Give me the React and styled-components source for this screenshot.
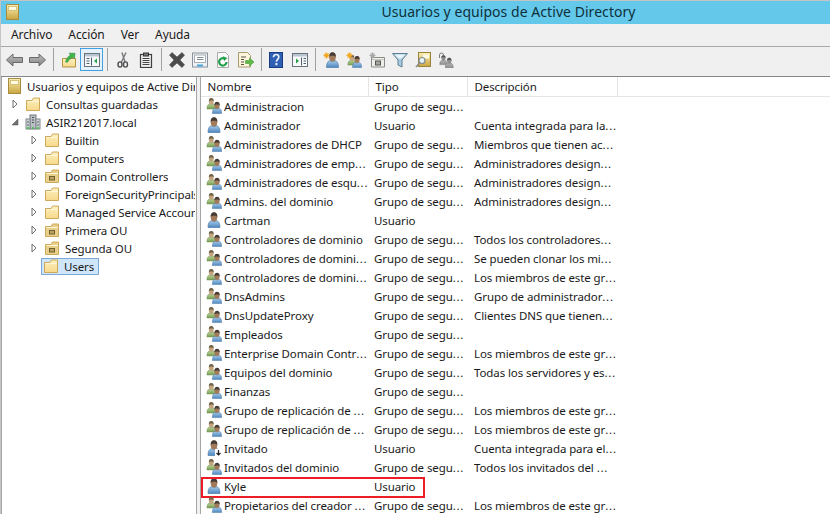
import React from 'react';
import styled, { createGlobalStyle } from 'styled-components';

const GlobalStyle = createGlobalStyle`
  html, body {
    margin: 0;
    padding: 0;
    background: #f0f0f0;
    overflow: hidden;
  }
`

const Window = styled.div`
  width: 830px;
  height: 514px;
  overflow: hidden;
  display: flex;
  flex-direction: column;
  background: #f0f0f0;
  border-top: 1px solid #c4c4c4;
  border-left: 1px solid #c4c4c4;
  box-sizing: border-box;
  font-family: "Noto Sans", sans-serif;
  font-size: 11.5px;
  letter-spacing: -0.1px;
  color: #1a1a1a;
`

const TitleBar = styled.div`
  height: 21px;
  flex: none;
  background: #63c8ea;
  position: relative;
  display: flex;
  align-items: center;
  justify-content: center;
  padding: 0 0 2px 186px;
  font-size: 14px;
  letter-spacing: 0.05px;
  color: #10303c;
`

const AppIcon = styled.span`
  position: absolute;
  left: 3px;
  top: 3px;
  display: flex;
`

const MenuBar = styled.div`
  height: 20px;
  flex: none;
  display: flex;
  align-items: center;
  padding: 0 0 2px 2px;
  border-bottom: 1px solid #a9a9a9;
  font-size: 12px;
`

const MenuItem = styled.span`
  padding: 0 8px;
`

const ToolBar = styled.div`
  height: 28px;
  flex: none;
  display: flex;
  align-items: flex-start;
  padding: 1px 0 0 2px;
  border-bottom: 1px solid #86868c;
`

const ToolSlot = styled.span`
  width: 23px;
  height: 23px;
  box-sizing: border-box;
  flex: none;
  display: flex;
  align-items: center;
  justify-content: center;
  border: 1px solid ${p => (p.$active ? '#3fa0e4' : 'transparent')};
  background: ${p => (p.$active ? '#e6f2fb' : 'none')};
`

const ToolSep = styled.span`
  width: 1px;
  height: 23px;
  flex: none;
  background: #a0a0a0;
  margin: 0 3px 0 4px;
`

const Panes = styled.div`
  flex: 1;
  min-height: 0;
  display: flex;
  gap: 3px;
`

const TreePane = styled.div`
  width: 196px;
  box-sizing: border-box;
  flex: none;
  background: #fff;
  overflow: hidden;
  border-left: 1px solid #a6a6a6;
  border-right: 1px solid #a6a6a6;
`

const TreeRow = styled.div`
  height: 18px;
  display: flex;
  align-items: center;
  white-space: nowrap;
  padding-left: ${p => p.$indent}px;
`

const Arrow = styled.span`
  width: 12px;
  flex: none;
  display: flex;
  justify-content: center;
  margin-right: 3px;
`

const TreeItem = styled.span`
  min-width: 0;
  height: 17px;
  box-sizing: border-box;
  display: flex;
  align-items: center;
  gap: 3px;
  margin-left: ${p => (p.$selected ? -2 : 0)}px;
  padding: ${p => (p.$selected ? '0 4px 0 1px' : '0 0 0 0')};
  border: 1px solid ${p => (p.$selected ? '#7da9d8' : 'transparent')};
  background: ${p => (p.$selected ? '#cfe5f9' : 'none')};
`

const TreeIcon = styled.span`
  width: 16px;
  height: 16px;
  flex: none;
  display: flex;
`

const TreeLabel = styled.span`
  min-width: 0;
  overflow: hidden;
  padding-left: 2px;
`

const ListPane = styled.div`
  flex: 1;
  min-width: 0;
  background: #fff;
  overflow: hidden;
  border-left: 1px solid #a6a6a6;
`

const ListHeader = styled.div`
  height: 19px;
  display: flex;
  border-bottom: 1px solid #e5e5e5;
`

const HeaderCell = styled.div`
  width: ${p => p.$width}px;
  box-sizing: border-box;
  flex: none;
  padding-left: 6.5px;
  line-height: 20px;
  border-right: 1px solid #e5e5e5;
`

const ListRow = styled.div`
  height: 19px;
  box-sizing: border-box;
  padding: 0 0 1px 5px;
  display: flex;
  align-items: center;
  white-space: nowrap;
  position: relative;

  ${p => p.$marked && `
    &::after {
      content: '';
      position: absolute;
      left: 0;
      top: 0;
      width: 224px;
      height: 21px;
      box-sizing: border-box;
      border: 2px solid #ee1c25;
    }
  `}
`

const RowIcon = styled.span`
  width: 16px;
  height: 16px;
  flex: none;
  display: flex;
  margin-right: 2px;
`

const NameCell = styled.span`
  width: 150px;
  flex: none;
`

const TypeCell = styled.span`
  width: 100px;
  flex: none;
`

const DescCell = styled.span`
  flex: none;
`

const Dots = styled.span`
  letter-spacing: 0.7px;
`

const Trimmed = ({ text }) =>
  text.endsWith('...') ? <>{text.slice(0, -3)}<Dots>...</Dots></> : text

const Svg = ({ children, size = 16 }) => (
  <svg width={size} height={size} viewBox="0 0 16 16">
    <defs>
      <linearGradient id="blue" x1="0" y1="0" x2="0" y2="1">
        <stop offset="0" stopColor="#a6cbe8" />
        <stop offset="1" stopColor="#4d86bf" />
      </linearGradient>
      <linearGradient id="green" x1="0" y1="0" x2="0" y2="1">
        <stop offset="0" stopColor="#b7cf92" />
        <stop offset="1" stopColor="#78a055" />
      </linearGradient>
      <linearGradient id="folder" x1="0" y1="0" x2="0" y2="1">
        <stop offset="0" stopColor="#fdf0bf" />
        <stop offset="1" stopColor="#f6d98a" />
      </linearGradient>
      <linearGradient id="gold" x1="0" y1="0" x2="0" y2="1">
        <stop offset="0" stopColor="#fbf0b8" />
        <stop offset="1" stopColor="#c9a53e" />
      </linearGradient>
      <linearGradient id="steel" x1="0" y1="0" x2="0" y2="1">
        <stop offset="0" stopColor="#b8b8b8" />
        <stop offset="1" stopColor="#8c8c8c" />
      </linearGradient>
    </defs>
    {children}
  </svg>
)

const Person = ({ dx = 0, dy = 0, scale = 1, body = 'url(#blue)', line = '#4f7dab', hair = '#463c36', face = '#a07a5a' }) => (
  <g transform={`translate(${dx} ${dy}) scale(${scale})`}>
    <path d="M2 15.500c0-4 1.300-6.500 3.300-6.800 1.600 1 3.800 1 5.400 0 2 .3 3.300 2.800 3.300 6.800z" fill={body} stroke={line} strokeWidth=".7" />
    <ellipse cx="8" cy="5" rx="3.300" ry="4.500" fill={face} />
    <path d="M4.700 5C4.300 1.800 6 .3 8 .3s3.700 1.500 3.300 4.700C10.500 3.400 5.500 3.400 4.700 5z" fill={hair} />
  </g>
)

const UserIcon = () => <Svg><Person /></Svg>

const GuestIcon = () => (
  <Svg>
    <Person />
    <rect x="9" y="9" width="7" height="7" fill="#fff" />
    <path d="M12.500 10v5M10.500 13l2 2 2-2" stroke="#222" strokeWidth="1.200" fill="none" />
  </Svg>
)

const GroupIcon = () => (
  <Svg>
    <Person dx={-.5} dy={-.2} scale={.72} body="url(#green)" line="#6e8f50" hair="#6f6248" face="#c2a57f" />
    <Person dx={4.800} dy={3.500} scale={.78} />
  </Svg>
)

const FolderIcon = ({ ou }) => (
  <Svg>
    <path d="M1.500 4.500h5.500l1.500-2.500h6v12.500h-13z" fill={ou ? '#e8cf8a' : 'url(#folder)'} stroke="#cfa95a" />
    <path d="M2.500 5.500h11.500" stroke="#fff6d8" />
    {ou && <rect x="5.500" y="8.500" width="5" height="3.500" fill="#bca35f" stroke="#6f5e32" />}
  </Svg>
)

const DomainIcon = () => (
  <Svg>
    <rect x="5" y="1" width="6" height="14" fill="#b9c0c4" stroke="#70787d" />
    <rect x="1" y="5" width="4" height="10" fill="#cfd5d8" stroke="#80888c" />
    <rect x="11" y="5" width="4" height="10" fill="#cfd5d8" stroke="#80888c" />
    <path d="M7 3.500h2M7 6h2M7 8.500h2" stroke="#4b5357" />
    <path d="M2 8h2M12 8h2M2 11h2M12 11h2" stroke="#5a6266" />
    <path d="M2 14h2M12 14h2M7 14h2" stroke="#39c23b" strokeWidth="1.500" />
  </Svg>
)

const SnapinIcon = () => (
  <Svg>
    <rect x="2.500" y=".5" width="12" height="15" fill="url(#gold)" stroke="#a58c3e" />
    <rect x="4.500" y="2.500" width="8" height="4" fill="#fffbe2" stroke="#c9b25c" strokeWidth=".7" />
  </Svg>
)

const ClosedArrow = () => (
  <svg width="6" height="10" viewBox="0 0 6 10">
    <path d="M1 1l4 4-4 4z" fill="#fff" stroke="#6f6f6f" />
  </svg>
)

const OpenArrow = () => (
  <svg width="8" height="8" viewBox="0 0 8 8">
    <path d="M7 1v6H1z" fill="#707070" stroke="#505050" strokeWidth=".5" />
  </svg>
)

const NavArrow = ({ flip }) => (
  <svg width="17" height="14" viewBox="0 0 17 14">
    <defs>
      <linearGradient id="nav" x1="0" y1="0" x2="0" y2="1">
        <stop offset="0" stopColor="#bdbdbd" />
        <stop offset="1" stopColor="#858585" />
      </linearGradient>
    </defs>
    <path
      d={flip ? 'M16.500 7L10 1v3.500H.5v5H10V13z' : 'M.5 7L7 1v3.500h9.500v5H7V13z'}
      fill="url(#nav)"
      stroke="#6a6a6a"
    />
  </svg>
)

const Spark = ({ color = '#f3a81f' }) => (
  <path d="M3.500 .5v6M.5 3.500h6M1.500 1.500l4 4M5.500 1.500l-4 4" stroke={color} strokeWidth="1.100" />
)

const toolIcons = {
  up: (
    <Svg>
      <path d="M1.500 6.500h13v8.500h-13z" fill="url(#folder)" stroke="#b5933f" />
      <path d="M4.500 10C5.500 6 7.500 4 9.500 3L8 1.200h6l-.5 5.600L12 5.300c-2 .8-4 2.500-5.500 5z" fill="#3fb54a" stroke="#24803a" strokeWidth=".5" />
    </Svg>
  ),
  showTree: (
    <Svg>
      <rect x=".5" y="1.500" width="15" height="13" fill="#f7f9fb" stroke="#68737c" />
      <rect x="1" y="2" width="14" height="2.500" fill="#b9c6d2" />
      <path d="M2.500 6.500h3M2.500 9h3M2.500 11.500h3M7.500 5.500v8" stroke="#4a5f73" />
      <path d="M13 6.500v5L10 9z" fill="#24a148" />
    </Svg>
  ),
  cut: (
    <Svg>
      <path d="M11 .5L6.500 10M7 .5l3 9.500" stroke="#7c7e82" strokeWidth="1.500" fill="none" />
      <ellipse cx="5" cy="12.500" rx="2" ry="2.600" fill="none" stroke="#4d4d4d" strokeWidth="1.400" />
      <ellipse cx="10.500" cy="12.500" rx="2" ry="2.600" fill="none" stroke="#4d4d4d" strokeWidth="1.400" />
    </Svg>
  ),
  paste: (
    <Svg>
      <rect x="2.500" y="2.500" width="11" height="13" fill="#eeeeee" stroke="#3f3f3f" strokeWidth="1.200" />
      <rect x="5.500" y="1" width="5" height="3" fill="#777" stroke="#333" />
      <path d="M4.500 6.500h7M4.500 8.500h7M4.500 10.500h7M4.500 12.500h7" stroke="#444" />
    </Svg>
  ),
  remove: (
    <Svg>
      <path d="M3 .5l5 4.500L13 .5l2.500 2.700L11 8l4.500 4.800L13 15.500 8 11l-5 4.500L.5 12.800 5 8 .5 3.200z" fill="#4a4a4a" stroke="#5c5c5c" strokeWidth=".7" />
    </Svg>
  ),
  props: (
    <Svg>
      <rect x=".5" y="1" width="15" height="14" fill="#eef0f2" stroke="#8b949c" />
      <rect x="2.500" y="3" width="11" height="7.500" fill="#fff" stroke="#a6adb3" />
      <path d="M5 5.500h6.500M5 7.500h6.500" stroke="#7f8a93" />
      <path d="M5 13.500h6" stroke="#46a6e0" strokeWidth="2" />
    </Svg>
  ),
  refresh: (
    <Svg>
      <path d="M2.500 .5h8l3 3v12h-11z" fill="#fafafa" stroke="#a9a9a9" />
      <path d="M11.500 10A3.700 3.700 0 1 1 9.500 6.600" fill="none" stroke="#1f9e4a" strokeWidth="2.200" />
      <path d="M8 4.300l4.300 1.700-3.200 3z" fill="#1f9e4a" />
    </Svg>
  ),
  exportList: (
    <Svg>
      <path d="M.5 .5h9l3 3v11.500H.5z" fill="#fdf6da" stroke="#a79a6e" />
      <path d="M3 5h5M3 7.500h3M3 10h3M3 12.500h3" stroke="#56544a" />
      <path d="M7.500 8.500h4V6L16 10l-4.500 4v-2.500h-4z" fill="#5dbb46" stroke="#3a8c2c" strokeWidth=".5" />
    </Svg>
  ),
  help: (
    <Svg>
      <rect x=".5" y=".5" width="13" height="15" fill="#2f5fb3" stroke="#1d3b80" />
      <path d="M4.500 5.300c0-2 1.200-2.800 2.600-2.800S9.800 3.400 9.800 5.100c0 2.200-2.400 2.300-2.400 4.600" fill="none" stroke="#e8eefb" strokeWidth="1.700" />
      <rect x="6.400" y="11" width="2" height="2.200" fill="#e8eefb" />
    </Svg>
  ),
  showAction: (
    <Svg>
      <rect x=".5" y="1.500" width="15" height="13" fill="#f7f9fb" stroke="#68737c" />
      <rect x="1" y="2" width="14" height="2.500" fill="#b9c6d2" />
      <path d="M11.500 6.500h2.500M11.500 9h2.500M11.500 11.500h2.500M9.500 5.500v8" stroke="#4a5f73" />
      <path d="M4 6.500v5L7 9z" fill="#24a148" />
    </Svg>
  ),
  newUser: (
    <Svg>
      <Person dx={1.500} />
      <Spark />
    </Svg>
  ),
  newGroup: (
    <Svg>
      <Person dx={.5} dy={2.500} scale={.68} body="url(#green)" line="#6e8f50" hair="#6f6248" face="#c2a57f" />
      <Person dx={5} dy={3.800} scale={.76} />
      <Spark />
    </Svg>
  ),
  newOu: (
    <Svg>
      <path d="M2.500 5.500h13v9.500h-13z" fill="#eeeeea" stroke="#8b8b86" />
      <path d="M3 7.500h12" stroke="#c8c8c4" />
      <rect x="6.500" y="9" width="5" height="4" fill="#a8a8a2" stroke="#55554f" />
      <Spark color="#a9a9a9" />
    </Svg>
  ),
  filter: (
    <Svg>
      <path d="M.5 1.500h15L10 8v7l-4-2V8z" fill="#a9cbe0" stroke="#5e7f93" />
      <path d="M2.500 2.500h11L9.500 6.500h-3z" fill="#eaf3f8" />
    </Svg>
  ),
  find: (
    <Svg>
      <rect x="3.500" y=".5" width="12" height="14" fill="url(#gold)" stroke="#9a8336" />
      <rect x="8" y="2.500" width="6" height="4" fill="#fffbe2" />
      <circle cx="7" cy="8.500" r="3" fill="#e9f2f6" stroke="#7d8c93" strokeWidth="1.200" />
      <path d="M5 10.500L1 15" stroke="#8c8c8c" strokeWidth="1.600" />
    </Svg>
  ),
  delegate: (
    <Svg>
      <path d="M1.500 6V3a2 2 0 0 1 4 0" fill="none" stroke="#7c7c7c" />
      <Person dx={.5} dy={3} scale={.62} body="url(#steel)" line="#6a6a6a" hair="#555" face="#8f8f8f" />
      <Person dx={6} dy={5.500} scale={.66} body="url(#steel)" line="#6a6a6a" hair="#555" face="#8f8f8f" />
    </Svg>
  ),
}

const toolbar = [
  ['back'], ['forward'], null,
  ['up'], ['showTree', true], null,
  ['cut'], ['paste'], null,
  ['remove'], ['props'], ['refresh'], ['exportList'], null,
  ['help'], ['showAction'], null,
  ['newUser'], ['newGroup'], ['newOu'], ['filter'], ['find'], ['delegate'],
]

const tree = [
  { label: 'Consultas guardadas', indent: 7, icon: 'folder', arrow: 'closed' },
  { label: 'ASIR212017.local', indent: 7, icon: 'domain', arrow: 'open' },
  { label: 'Builtin', indent: 26, icon: 'folder', arrow: 'closed' },
  { label: 'Computers', indent: 26, icon: 'folder', arrow: 'closed' },
  { label: 'Domain Controllers', indent: 26, icon: 'ou', arrow: 'closed' },
  { label: 'ForeignSecurityPrincipals', indent: 26, icon: 'folder', arrow: 'closed' },
  { label: 'Managed Service Accounts', indent: 26, icon: 'folder', arrow: 'closed' },
  { label: 'Primera OU', indent: 26, icon: 'ou', arrow: 'closed' },
  { label: 'Segunda OU', indent: 26, icon: 'ou', arrow: 'closed' },
  { label: 'Users', indent: 26, icon: 'folder', selected: true },
]

const G = 'Grupo de segu...'
const U = 'Usuario'

const rows = [
  ['group', 'Administracion', G, ''],
  ['user', 'Administrador', U, 'Cuenta integrada para la...'],
  ['group', 'Administradores de DHCP', G, 'Miembros que tienen ac...'],
  ['group', 'Administradores de emp...', G, 'Administradores design...'],
  ['group', 'Administradores de esqu...', G, 'Administradores design...'],
  ['group', 'Admins. del dominio', G, 'Administradores design...'],
  ['user', 'Cartman', U, ''],
  ['group', 'Controladores de dominio', G, 'Todos los controladores...'],
  ['group', 'Controladores de domini...', G, 'Se pueden clonar los mi...'],
  ['group', 'Controladores de domini...', G, 'Los miembros de este gr...'],
  ['group', 'DnsAdmins', G, 'Grupo de administrador...'],
  ['group', 'DnsUpdateProxy', G, 'Clientes DNS que tienen...'],
  ['group', 'Empleados', G, ''],
  ['group', 'Enterprise Domain Contr...', G, 'Los miembros de este gr...'],
  ['group', 'Equipos del dominio', G, 'Todas los servidores y es...'],
  ['group', 'Finanzas', G, ''],
  ['group', 'Grupo de replicación de ...', G, 'Los miembros de este gr...'],
  ['group', 'Grupo de replicación de ...', G, 'Los miembros de este gr...'],
  ['guest', 'Invitado', U, 'Cuenta integrada para el...'],
  ['group', 'Invitados del dominio', G, 'Todos los invitados del ...'],
  ['user', 'Kyle', U, ''],
  ['group', 'Propietarios del creador ...', G, 'Los miembros de este gr...'],
]

const treeIcons = {
  folder: <FolderIcon />,
  ou: <FolderIcon ou />,
  domain: <DomainIcon />,
}

const rowIcons = {
  group: <GroupIcon />,
  user: <UserIcon />,
  guest: <GuestIcon />,
}

export default function App() {
  return (
    <>
      <GlobalStyle />
      <Window>
        <TitleBar>
          <AppIcon><SnapinIcon /></AppIcon>
          Usuarios y equipos de Active Directory
        </TitleBar>

        <MenuBar>
          <MenuItem>Archivo</MenuItem>
          <MenuItem>Acción</MenuItem>
          <MenuItem>Ver</MenuItem>
          <MenuItem>Ayuda</MenuItem>
        </MenuBar>

        <ToolBar>
          {toolbar.map((tool, key) => {
            if (!tool) return <ToolSep key={key} />
            const [name, active] = tool
            return (
              <ToolSlot key={key} $active={active}>
                {name === 'back' && <NavArrow />}
                {name === 'forward' && <NavArrow flip />}
                {toolIcons[name]}
              </ToolSlot>
            )
          })}
        </ToolBar>

        <Panes>
          <TreePane>
            <TreeRow $indent={3}>
              <TreeItem>
                <TreeIcon><SnapinIcon /></TreeIcon>
                <TreeLabel>Usuarios y equipos de Active Directory</TreeLabel>
              </TreeItem>
            </TreeRow>
            {tree.map((item, key) => (
              <TreeRow $indent={item.indent} key={key}>
                <Arrow>
                  {item.arrow === 'closed' && <ClosedArrow />}
                  {item.arrow === 'open' && <OpenArrow />}
                </Arrow>
                <TreeItem $selected={item.selected}>
                  <TreeIcon>{treeIcons[item.icon]}</TreeIcon>
                  <TreeLabel>{item.label}</TreeLabel>
                </TreeItem>
              </TreeRow>
            ))}
          </TreePane>

          <ListPane>
            <ListHeader>
              <HeaderCell $width={168}>Nombre</HeaderCell>
              <HeaderCell $width={99}>Tipo</HeaderCell>
              <HeaderCell $width={150}>Descripción</HeaderCell>
            </ListHeader>
            {rows.map(([icon, name, type, desc], key) => (
              <ListRow key={key} $marked={name === 'Kyle'}>
                <RowIcon>{rowIcons[icon]}</RowIcon>
                <NameCell><Trimmed text={name} /></NameCell>
                <TypeCell><Trimmed text={type} /></TypeCell>
                <DescCell><Trimmed text={desc} /></DescCell>
              </ListRow>
            ))}
          </ListPane>
        </Panes>
      </Window>
    </>
  )
}
